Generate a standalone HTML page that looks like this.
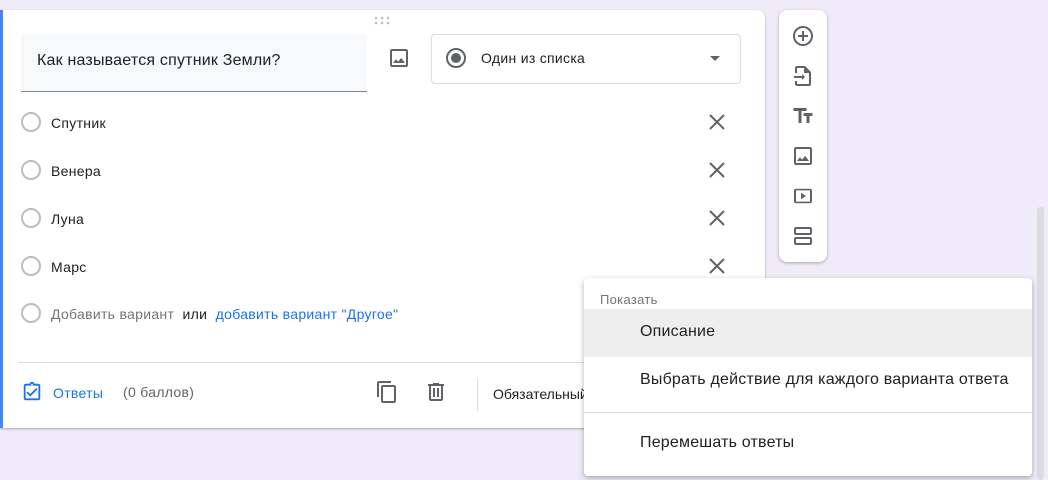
<!DOCTYPE html>
<html><head><meta charset="utf-8"><style>
body{margin:0;width:1048px;height:480px;background:#f0ebf8;position:relative;overflow:hidden;font-family:"Liberation Sans",Roboto,sans-serif;color:#202124;letter-spacing:0.3px}
.a{position:absolute}
.card{left:0;top:10px;width:765px;height:418px;background:#fff;border-radius:0 8px 0 0;box-shadow:0 1px 2px rgba(0,0,0,.3)}
.bl{left:0;top:10px;width:3px;height:418px;background:#4285f4}
.q{left:21px;top:34px;width:346px;height:57px;background:#f8f9fa;border-bottom:1px solid #80868b}
.q span{position:absolute;left:16px;top:18px;font-size:16px;letter-spacing:0.2px}
.dd{left:431px;top:34px;width:308px;height:48px;border:1px solid #dadce0;border-radius:4px}
.rc{width:16px;height:16px;border:2px solid #bdbdbd;border-radius:50%}
.opt{font-size:14px}
.tb{left:779px;top:10px;width:48px;height:252px;background:#fff;border-radius:8px;box-shadow:0 1px 3px rgba(0,0,0,.3)}
.menu{left:584px;top:278px;width:448px;height:198px;background:#fff;border-radius:4px;box-shadow:0 2px 6px rgba(0,0,0,.3)}
.mi{font-size:16px;left:56px;letter-spacing:0.2px}
</style></head><body>
<div class="a" style="left:1037px;top:207px;width:7px;height:273px;background:#dadce0;border-radius:4px"></div>
<div class="a card"></div><div class="a bl"></div>
<svg class="a" style="left:373px;top:16px" width="18" height="10"><g fill="#bdbdbd"><circle cx="3" cy="2" r="1.3"/><circle cx="9" cy="2" r="1.3"/><circle cx="15" cy="2" r="1.3"/><circle cx="3" cy="7" r="1.3"/><circle cx="9" cy="7" r="1.3"/><circle cx="15" cy="7" r="1.3"/></g></svg>
<div class="a q"><span>Как называется спутник Земли?</span></div>
<svg class="a" style="left:387px;top:46px" width="24" height="24" viewBox="0 0 24 24"><path fill="#5f6368" d="M19 5v14H5V5h14m0-2H5c-1.1 0-2 .9-2 2v14c0 1.1.9 2 2 2h14c1.1 0 2-.9 2-2V5c0-1.1-.9-2-2-2zm-4.86 8.86l-3 3.870L9 13.14 6 17h12l-3.86-5.14z"/></svg>
<div class="a dd"></div>
<svg class="a" style="left:445px;top:47px" width="22" height="22"><circle cx="11" cy="11" r="9" fill="none" stroke="#5f6368" stroke-width="2"/><circle cx="11" cy="11" r="5" fill="#5f6368"/></svg>
<div class="a" style="left:481px;top:50px;font-size:14px">Один из списка</div>
<svg class="a" style="left:710px;top:56px" width="10" height="5"><path d="M0 0h10L5 5z" fill="#5f6368"/></svg>
<div class="a rc" style="left:21px;top:112px"></div><div class="a opt" style="left:51px;top:115px">Спутник</div>
<div class="a rc" style="left:21px;top:160px"></div><div class="a opt" style="left:51px;top:163px">Венера</div>
<div class="a rc" style="left:21px;top:208px"></div><div class="a opt" style="left:51px;top:211px">Луна</div>
<div class="a rc" style="left:21px;top:256px"></div><div class="a opt" style="left:51px;top:259px">Марс</div>
<svg class="a" style="left:709px;top:114px" width="16" height="160"><g stroke="#5f6368" stroke-width="2"><path d="M1 1l14 14M15 1L1 15"/><path d="M1 49l14 14M15 49L1 63"/><path d="M1 97l14 14M15 97L1 111"/><path d="M1 145l14 14M15 145L1 159"/></g></svg>
<div class="a rc" style="left:21px;top:303px"></div>
<div class="a opt" style="left:51px;top:306px;color:#70757a">Добавить вариант <span style="color:#202124">&nbsp;или&nbsp;</span> <span style="color:#1a73e8">добавить вариант "Другое"</span></div>
<div class="a" style="left:18px;top:362px;width:747px;height:1px;background:#dadce0"></div>
<svg class="a" style="left:21px;top:381px" width="22" height="22" viewBox="0 0 24 24"><path fill="#1a73e8" d="M19 3h-4.18C14.4 1.84 13.3 1 12 1s-2.4.84-2.82 2H5c-1.1 0-2 .9-2 2v14c0 1.1.9 2 2 2h14c1.1 0 2-.9 2-2V5c0-1.1-.9-2-2-2zm-7 0c.55 0 1 .45 1 1s-.45 1-1 1-1-.45-1-1 .45-1 1-1zm7 16H5V5h14v14zM10 17l-4-4 1.4-1.4 2.6 2.6 6.6-6.6L18 9z"/></svg>
<div class="a" style="left:53px;top:385px;font-size:14px;color:#1a73e8">Ответы</div>
<div class="a" style="left:123px;top:384px;font-size:14px;color:#5f6368">(0 баллов)</div>
<svg class="a" style="left:376px;top:380px" width="24" height="24" viewBox="0 0 24 24"><path fill="#5f6368" d="M16 1H4c-1.1 0-2 .9-2 2v14h2V3h12V1zm3 4H8c-1.1 0-2 .9-2 2v14c0 1.1.9 2 2 2h11c1.1 0 2-.9 2-2V7c0-1.1-.9-2-2-2zm0 16H8V7h11v14z" transform="translate(-1 0)"/></svg>
<svg class="a" style="left:424px;top:380px" width="24" height="24" viewBox="0 0 24 24"><path fill="#5f6368" d="M15 4V3H9v1H4v2h1v13c0 1.1.9 2 2 2h10c1.1 0 2-.9 2-2V6h1V4h-5zm2 15H7V6h10v13zM9 8h2v9H9zm4 0h2v9h-2z"/></svg>
<div class="a" style="left:477px;top:379px;width:1px;height:32px;background:#dadce0"></div>
<div class="a" style="left:493px;top:386px;font-size:14px;letter-spacing:0">Обязательный</div>
<div class="a tb"></div>
<svg class="a" style="left:791px;top:24px" width="24" height="230" viewBox="0 0 24 230"><g fill="#5f6368">
<path d="M13 7h-2v4H7v2h4v4h2v-4h4v-2h-4V7zm-1-5C6.48 2 2 6.48 2 12s4.48 10 10 10 10-4.480 10-10S17.52 2 12 2zm0 18c-4.41 0-8-3.59-8-8s3.59-8 8-8 8 3.590 8 8-3.59 8-8 8z"/>
<g transform="translate(0 40)"><path d="M14 2H6c-1.1 0-2 .9-2 2v5h2V4h7v5h5v11H6v-3H4v3c0 1.1.9 2 2 2h12c1.1 0 2-.9 2-2V8l-6-6zM11 14H3v-2h8v-2l3 3-3 3z"/></g>
<g transform="translate(0 80)"><path d="M2.5 4v3h5v12h3V7h5V4h-13zm19 5h-9v3h3v7h3v-7h3V9z"/></g>
<g transform="translate(0 120)"><path d="M19 5v14H5V5h14m0-2H5c-1.1 0-2 .9-2 2v14c0 1.1.9 2 2 2h14c1.1 0 2-.9 2-2V5c0-1.1-.9-2-2-2zm-4.86 8.86l-3 3.87L9 13.14 6 17h12l-3.86-5.14z"/></g>
<g transform="translate(0 160)"><path d="M10 8v8l5-4-5-4zm9-5H5c-1.1 0-2 .9-2 2v14c0 1.1.9 2 2 2h14c1.1 0 2-.9 2-2V5c0-1.1-.9-2-2-2zm0 16H5V5h14v14z" transform="scale(1 0.8) translate(0 3)"/></g>
<g transform="translate(0 200)"><path d="M19 13H5c-1.1 0-2 .9-2 2v4c0 1.1.9 2 2 2h14c1.1 0 2-.9 2-2v-4c0-1.1-.9-2-2-2zm0 6H5v-4h14v4zm0-16H5c-1.1 0-2 .9-2 2v4c0 1.1.9 2 2 2h14c1.1 0 2-.9 2-2V5c0-1.1-.9-2-2-2zm0 6H5V5h14v4z"/></g>
</g></svg>
<div class="a menu">
<div class="a" style="left:16px;top:14px;font-size:13px;color:#70757a">Показать</div>
<div class="a" style="left:0;top:31px;width:448px;height:48px;background:#eeeeee"></div>
<div class="a mi" style="top:45px">Описание</div>
<div class="a mi" style="top:93px">Выбрать действие для каждого варианта ответа</div>
<div class="a" style="left:0;top:134px;width:448px;height:1px;background:#dadce0"></div>
<div class="a mi" style="top:156px">Перемешать ответы</div>
</div>
</body></html>
